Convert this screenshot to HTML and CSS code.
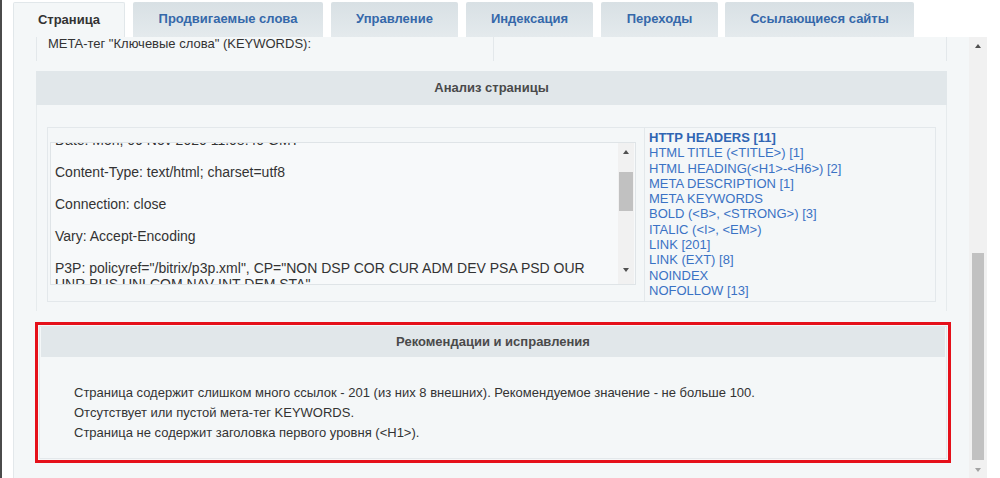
FILE: index.html
```html
<!DOCTYPE html>
<html lang="ru">
<head>
<meta charset="utf-8">
<title>Анализ страницы</title>
<link rel="stylesheet" href="styles.css">
</head>
<body>
<div class="frame">
  <div class="edge"></div>
  <div class="main">
    <div class="tabs">
      <div class="tab active t1">Страница</div>
      <div class="tab t2">Продвигаемые слова</div>
      <div class="tab t3">Управление</div>
      <div class="tab t4">Индексация</div>
      <div class="tab t5">Переходы</div>
      <div class="tab t6">Ссылающиеся сайты</div>
    </div>
    <div class="panel">
      <div class="content">
        <div class="meta-row">
          <div class="cell cell-left">META-тег "Ключевые слова" (KEYWORDS):</div>
          <div class="cell cell-right"></div>
        </div>
        <div class="bar">Анализ страницы</div>
        <div class="analysis">
          <div class="box">
            <div class="box-left">
              <div class="ta">
                <div class="ta-text">
                  <p>Date: Mon, 09 Nov 2020 11:08:40 GMT</p>
                  <p>Content-Type: text/html; charset=utf8</p>
                  <p>Connection: close</p>
                  <p>Vary: Accept-Encoding</p>
                  <p>P3P: policyref="/bitrix/p3p.xml", CP="NON DSP COR CUR ADM DEV PSA PSD OUR UNR BUS UNI COM NAV INT DEM STA"</p>
                </div>
                <div class="ta-scroll">
                  <div class="arrow"><span class="tri up"></span></div>
                  <div class="ta-track"><div class="ta-thumb"></div></div>
                  <div class="arrow"><span class="tri down"></span></div>
                </div>
              </div>
            </div>
            <div class="box-right">
              <a class="lnk strong">HTTP HEADERS [11]</a>
              <a class="lnk">HTML TITLE (&lt;TITLE&gt;) [1]</a>
              <a class="lnk">HTML HEADING(&lt;H1&gt;-&lt;H6&gt;) [2]</a>
              <a class="lnk">META DESCRIPTION [1]</a>
              <a class="lnk">META KEYWORDS</a>
              <a class="lnk">BOLD (&lt;B&gt;, &lt;STRONG&gt;) [3]</a>
              <a class="lnk">ITALIC (&lt;I&gt;, &lt;EM&gt;)</a>
              <a class="lnk">LINK [201]</a>
              <a class="lnk">LINK (EXT) [8]</a>
              <a class="lnk">NOINDEX</a>
              <a class="lnk">NOFOLLOW [13]</a>
            </div>
          </div>
        </div>
        <div class="reco">
          <div class="reco-inner">
            <div class="bar bar-reco">Рекомендации и исправления</div>
            <div class="reco-body">
              <div class="reco-line">Страница содержит слишком много ссылок - 201 (из них 8 внешних). Рекомендуемое значение - не больше 100.</div>
              <div class="reco-line">Отсутствует или пустой мета-тег KEYWORDS.</div>
              <div class="reco-line">Страница не содержит заголовка первого уровня (&lt;H1&gt;).</div>
            </div>
          </div>
        </div>
      </div>
      <div class="vscroll">
        <div class="arrow big"><span class="tri up"></span></div>
        <div class="track"><div class="thumb"></div></div>
        <div class="arrow big"><span class="tri down light"></span></div>
      </div>
    </div>
  </div>
</div>
</body>
</html>
```

FILE: styles.css
```css
html, body {
  margin: 0;
  padding: 0;
  background: #ffffff;
  font-family: "Liberation Sans", Arial, sans-serif;
  color: #333333;
  overflow: hidden;
}

.frame {
  display: flex;
  width: 1000px;
  height: 478px;
  overflow: hidden;
}

.edge {
  width: 2px;
  background: #4b4b4b;
  flex: none;
}

.main {
  margin-left: 11px;
  width: 974px;
  display: flex;
  flex-direction: column;
}

/* Tabs */
.tabs {
  display: flex;
  gap: 8px;
  padding-top: 2px;
  height: 35px;
  flex: none;
}

.tab {
  height: 35px;
  line-height: 33px;
  text-align: center;
  font-size: 13px;
  font-weight: bold;
  color: #3568aa;
  background: linear-gradient(#d8e0e4, #e4eaed);
  box-sizing: border-box;
  border-radius: 2px 2px 0 0;
}

.tab.active {
  background: #f4f7f8;
  color: #333333;
  border: 1px solid #e1e7ea;
  border-bottom: none;
  height: 36px;
}

.t1 { width: 112px; }
.t2 { width: 190px; }
.t3 { width: 127px; }
.t4 { width: 127px; }
.t5 { width: 117px; }
.t6 { width: 189px; margin-left: -1px; }

/* Panel */
.panel {
  display: flex;
  height: 441px;
  background: #f4f7f8;
  border-left: 1px solid #e3e8eb;
  overflow: hidden;
}

.content {
  width: 955px;
  padding: 0 22px;
  box-sizing: border-box;
  overflow: hidden;
  flex: none;
}

.meta-row {
  display: flex;
  margin-top: -8px;
  height: 32px;
}

.cell {
  box-sizing: border-box;
  font-size: 13px;
  line-height: 15px;
  padding-top: 7px;
  color: #333333;
}

.cell-left {
  width: 457px;
  padding-left: 11px;
  border-left: 1px solid #e3e8eb;
}

.cell-right {
  width: 454px;
  border-left: 1px solid #e3e8eb;
  border-right: 1px solid #e3e8eb;
}

.bar {
  margin-top: 10px;
  height: 34px;
  line-height: 34px;
  background: #e1e7ea;
  text-align: center;
  font-size: 13px;
  font-weight: bold;
  color: #4a4a4a;
}

/* Analysis */
.analysis {
  height: 206px;
  box-sizing: border-box;
  padding: 22px 10px 9px 10px;
  border-left: 1px solid #e6ebed;
  border-right: 1px solid #e6ebed;
}

.box {
  display: flex;
  height: 175px;
  box-sizing: border-box;
  border: 1px solid #e3e8eb;
}

.box-left {
  width: 597px;
  box-sizing: border-box;
  border-right: 1px solid #e3e8eb;
  padding: 14px 0 0 2px;
  flex: none;
}

.ta {
  display: flex;
  width: 586px;
  height: 143px;
  box-sizing: border-box;
  border: 1px solid #dfe4e7;
  background: #f7f9fa;
  overflow: hidden;
}

.ta-text {
  width: 567px;
  padding-left: 4px;
  box-sizing: border-box;
  margin-top: -11px;
  font-size: 14px;
  line-height: 16px;
  color: #333333;
  flex: none;
}

.ta-text p {
  margin: 0 0 16px 0;
  padding-right: 6px;
}

.ta-scroll {
  width: 16px;
  display: flex;
  flex-direction: column;
  background: #f1f1f1;
  padding-bottom: 6px;
  flex: none;
}

.arrow {
  height: 17px;
  display: flex;
  align-items: center;
  justify-content: center;
  flex: none;
}

.tri {
  width: 0;
  height: 0;
  border-left: 3.5px solid transparent;
  border-right: 3.5px solid transparent;
}

.tri.up {
  border-bottom: 4px solid #505050;
}

.tri.down {
  border-top: 4px solid #505050;
}

.tri.down.light {
  border-top-color: #a3a3a3;
}

.ta-track {
  flex: 1;
  padding: 12px 1px 0 1px;
}

.ta-thumb {
  height: 39px;
  background: #c1c1c1;
}

.box-right {
  padding: 2px 0 0 4px;
  display: flex;
  flex-direction: column;
}

.lnk {
  font-size: 13px;
  line-height: 15.3px;
  color: #3a72c4;
  text-decoration: none;
  white-space: nowrap;
}

.lnk.strong {
  font-weight: bold;
  color: #2f65b3;
}

/* Recommendations */
.reco {
  margin: 11px -4px 0 -1px;
  border: 3px solid #e5101a;
  padding: 1px;
  height: 141px;
  box-sizing: border-box;
}

.reco-inner {
  height: 100%;
  box-sizing: border-box;
  border: 1px solid #e3e8eb;
}

.bar-reco {
  margin: 0 1px;
  height: 30px;
  line-height: 29px;
}

.reco-body {
  padding: 26px 0 0 34px;
  font-size: 13px;
  line-height: 20px;
  color: #333333;
}

/* Page scrollbar */
.vscroll {
  width: 18px;
  margin-left: 0;
  display: flex;
  flex-direction: column;
  background: #f1f1f1;
  flex: none;
}

.arrow.big {
  height: 17px;
}

.track {
  flex: 1;
  padding: 199px 3px 0 3px;
}

.thumb {
  height: 207px;
  background: #c1c1c1;
}
```
